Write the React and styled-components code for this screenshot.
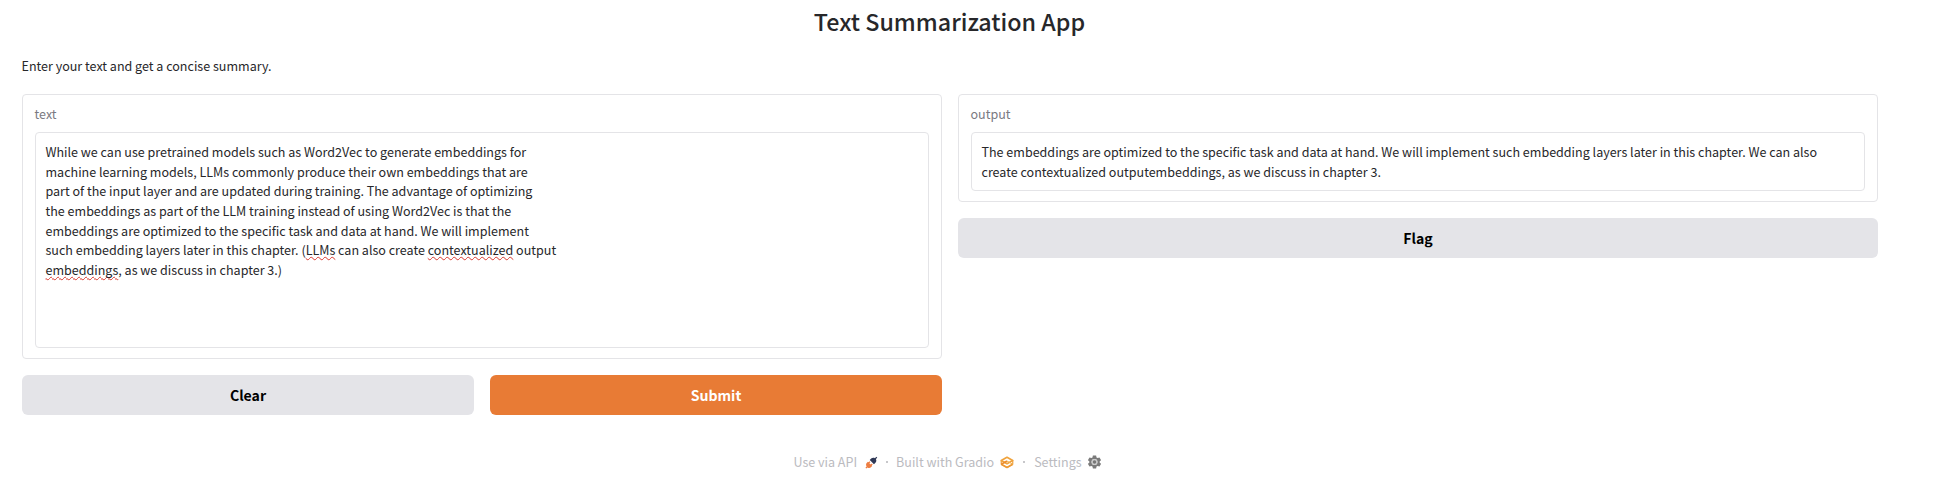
import React from "react";
import styled, { createGlobalStyle } from "styled-components";

const GlobalStyle = createGlobalStyle`
  *, *::before, *::after { box-sizing: border-box; }
  body {
    margin: 0;
    background: #fff;
    color: #27272a;
    font-family: "Noto Sans CJK SC", "Open Sans", sans-serif;
    font-size: 12.54px;
    line-height: 19.6px;
  }
`;

const Page = styled.main`
  width: 1900px;
  height: 493px;
  padding: 0 22px;
  display: flex;
  flex-direction: column;
`;

const Title = styled.h1`
  margin: 5px 0 0;
  height: 32px;
  font-size: 23.3px;
  line-height: 32px;
  font-weight: 500;
  text-align: center;
  text-indent: -1px;
`;

const Description = styled.p`
  margin: 19px 0 0;
  height: 38px;
  line-height: 20px;
  text-indent: -0.5px;
`;

const Columns = styled.div`
  display: grid;
  grid-template-columns: 1fr 1fr;
  gap: 16px;
`;

const Column = styled.section`
  display: flex;
  flex-direction: column;
  gap: 16px;
`;

const Card = styled.div`
  height: ${(p) => p.$height}px;
  padding: 9px 12px 10px;
  border: 1px solid #e4e4e7;
  border-radius: 4px;
  display: flex;
  flex-direction: column;
  gap: 8px;
`;

const Label = styled.span`
  height: 20px;
  line-height: 20px;
  color: #7a7a82;
  text-indent: -0.5px;
`;

const TextBox = styled.div`
  flex: 1;
  padding: 9.25px 9.5px 0;
  border: 1px solid #e4e4e7;
  border-radius: 4px;
`;

const Line = styled.div`
  height: 19.6px;
  white-space: pre;
`;

const Misspelled = styled.span`
  text-decoration: underline wavy #d9382e 1.3px;
  text-decoration-skip-ink: none;
  text-underline-offset: 1px;
`;

const Actions = styled.div`
  display: flex;
  gap: 16px;
`;

const Button = styled.button`
  flex: 1 1 0;
  height: 40px;
  padding: 0;
  border: 0;
  border-radius: 6px;
  background: ${(p) => (p.$primary ? "#e87b35" : "#e4e4e8")};
  color: ${(p) => (p.$primary ? "#fff" : "#000")};
  font-family: inherit;
  font-size: 14.1px;
  font-weight: 700;
  line-height: 24px;
`;

const Footer = styled.footer`
  margin-top: 37px;
  height: 20px;
  padding-right: 6px;
  display: flex;
  justify-content: center;
  align-items: center;
  color: #bbbbbf;
`;

const FooterItem = styled.span`
  display: flex;
  align-items: center;
  gap: ${(p) => p.$gap}px;
`;

const Dot = styled.span`
  width: ${(p) => p.$width}px;
  display: flex;
  justify-content: center;

  &::before {
    content: "";
    width: 2px;
    height: 2px;
    border-radius: 1px;
    background: #b4b4b8;
  }
`;

const PlugIcon = () => (
  <svg width="13" height="13" viewBox="0 0 26 26">
    <g transform="rotate(45 13 13)">
      <path d="M7 12V8C7 5 9 2.500 11.700 2V-2h2.600v4C17 2.500 19 5 19 8v4Z" fill="#2f3856" />
      <path d="M7 17h1.500v-3H11v3h4v-3h2.500v3H19v3c0 3-2 5-4.700 5.500V29h-2.600v-3.500C9 25 7 23 7 20Z" fill="#ed7d42" />
    </g>
  </svg>
);

const GradioIcon = () => (
  <svg width="14" height="13" viewBox="0 0 28 26" fill="none" strokeWidth="3.400" strokeLinejoin="round">
    <path d="M14 2.500 2.500 9 14 15.500 25.500 9Z" stroke="#f0a33c" />
    <path d="M2.500 9v7.500L14 23l11.500-6.500V9" stroke="#eda040" strokeWidth="2.400" />
    <path d="M2.500 16.500 14 23l11.500-6.500" stroke="#ed9a35" />
    <path d="M14 10 25.500 16.500" stroke="#f3b04c" strokeWidth="2" />
    <path d="M2.500 16.500 14 10" stroke="#ec8d2e" />
  </svg>
);

const GearIcon = () => (
  <svg width="13" height="14" viewBox="2 1.500 20 21">
    <path
      fill="#7b7b7b"
      fillRule="evenodd"
      d="M9.500 2h5l.6 3 1.700 1 2.900-1 2.500 4.300-2.300 2v1.400l2.300 2-2.500 4.300-2.900-1-1.700 1-.6 3h-5l-.6-3-1.700-1-2.900 1-2.500-4.300 2.300-2v-1.400l-2.300-2L4.300 5l2.900 1 1.700-1ZM12 7.500a4.500 4.500 0 1 0 0 9 4.500 4.500 0 0 0 0-9Z"
    />
    <circle cx="12" cy="12" r="4.500" fill="#c9c9c9" />
    <circle cx="12" cy="12" r="2.600" fill="#777" />
  </svg>
);

export default function App() {
  return (
    <>
      <GlobalStyle />
      <Page>
        <Title>Text Summarization App</Title>
        <Description>Enter your text and get a concise summary.</Description>
        <Columns>
          <Column>
            <Card $height={265}>
              <Label>text</Label>
              <TextBox>
                <Line>While we can use pretrained models such as Word2Vec to generate embeddings for</Line>
                <Line>machine learning models, LLMs commonly produce their own embeddings that are</Line>
                <Line>part of the input layer and are updated during training. The advantage of optimizing</Line>
                <Line>the embeddings as part of the LLM training instead of using Word2Vec is that the</Line>
                <Line>embeddings are optimized to the specific task and data at hand. We will implement</Line>
                <Line>
                  such embedding layers later in this chapter. (<Misspelled>LLMs</Misspelled> can also create{" "}
                  <Misspelled>contextualized</Misspelled> output
                </Line>
                <Line>
                  <Misspelled>embeddings</Misspelled>, as we discuss in chapter 3.)
                </Line>
              </TextBox>
            </Card>
            <Actions>
              <Button>Clear</Button>
              <Button $primary>Submit</Button>
            </Actions>
          </Column>
          <Column>
            <Card $height={108}>
              <Label>output</Label>
              <TextBox>
                <Line>
                  The embeddings are optimized to the specific task and data at hand. We will implement such embedding
                  layers later in this chapter. We can also
                </Line>
                <Line>create contextualized outputembeddings, as we discuss in chapter 3.</Line>
              </TextBox>
            </Card>
            <Actions>
              <Button>Flag</Button>
            </Actions>
          </Column>
        </Columns>
        <Footer>
          <FooterItem $gap={8}>
            Use via API <PlugIcon />
          </FooterItem>
          <Dot $width={18} />
          <FooterItem $gap={6}>
            Built with Gradio <GradioIcon />
          </FooterItem>
          <Dot $width={20} />
          <FooterItem $gap={6}>
            Settings <GearIcon />
          </FooterItem>
        </Footer>
      </Page>
    </>
  );
}
